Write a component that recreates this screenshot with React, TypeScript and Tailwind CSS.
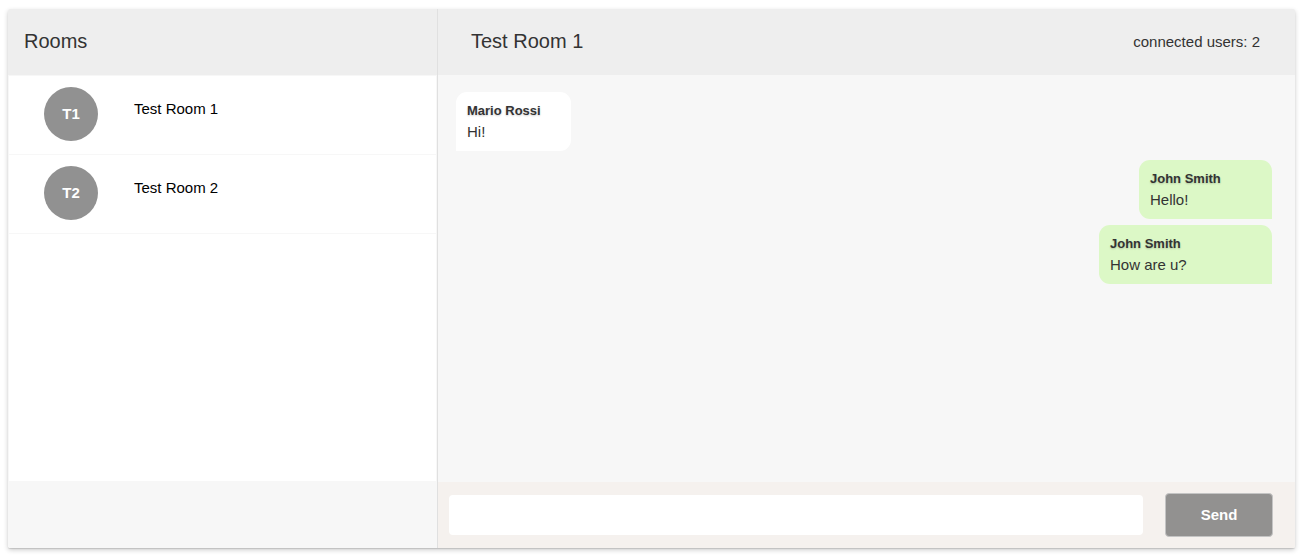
import { useState } from "react";

const rooms = [
  { id: "T1", name: "Test Room 1" },
  { id: "T2", name: "Test Room 2" },
];

const messages = [
  { author: "Mario Rossi", text: "Hi!", style: "mb-2 w-[115px] self-start rounded-bl-none bg-white" },
  { author: "John Smith", text: "Hello!", style: "mt-px w-[133px] self-end rounded-br-none bg-[#dcf8c6]" },
  { author: "John Smith", text: "How are u?", style: "mt-1.5 w-[173px] self-end rounded-br-none bg-[#dcf8c6]" },
];

export default function App() {
  const [draft, setDraft] = useState("");

  return (
    <div className="flex min-h-screen bg-white px-2 pt-[9px] pb-3 font-['Liberation_Sans',Arial,sans-serif] text-[15px] text-[#333]">
      <div className="flex flex-1 overflow-hidden rounded-xs shadow-[0_1px_1px_0_rgba(0,0,0,0.12),0_2px_5px_0_rgba(0,0,0,0.2)]">
        <aside className="flex w-1/3 flex-col">
          <header className="flex h-[66px] items-center bg-[#eee] px-4 pb-0.5">
            <h2 className="text-[20px] leading-6">Rooms</h2>
          </header>
          <ul className="flex-1 border border-b-0 border-[#f7f7f7] bg-white text-black">
            {rooms.map((room) => (
              <li key={room.id} className="border-b border-[#f7f7f7]">
                <button type="button" className="flex h-[78px] w-full items-start pt-[11px] pl-[35px] text-left">
                  <span className="flex size-[54px] items-center justify-center rounded-full bg-[#919191] font-bold text-white">
                    {room.id}
                  </span>
                  <span className="pt-3 pl-9 leading-5">{room.name}</span>
                </button>
              </li>
            ))}
          </ul>
          <div className="h-[67px] bg-[#f7f7f7]" />
        </aside>

        <main className="flex flex-1 flex-col border-l border-[#e0e0e0] bg-[#f7f7f7]">
          <header className="flex h-[66px] items-center justify-between bg-[#eee] pr-[35px] pb-0.5 pl-[33px]">
            <h1 className="text-[20px] leading-6">Test Room 1</h1>
            <span className="pt-0.5 leading-5">connected users: 2</span>
          </header>
          <section className="flex flex-1 flex-col pt-[17px] pr-[23px] pb-4 pl-[18px]">
            {messages.map((message, index) => (
              <article key={index} className={`h-[59px] rounded-[11px] px-[11px] pt-[9px] ${message.style}`}>
                <h3 className="text-[13px] leading-5 font-bold [text-shadow:0_1px_2px_rgba(0,0,0,0.2)]">
                  {message.author}
                </h3>
                <p className="leading-[22px]">{message.text}</p>
              </article>
            ))}
          </section>
          <form
            className="flex h-[66px] items-center bg-[#f5f1ee] pr-[22px] pl-[11px]"
            onSubmit={(event) => {
              event.preventDefault();
              setDraft("");
            }}
          >
            <input
              type="text"
              aria-label="Message"
              value={draft}
              onChange={(event) => setDraft(event.target.value)}
              className="h-10 min-w-0 flex-1 rounded bg-white px-3 outline-none"
            />
            <button
              type="submit"
              className="ml-[22px] h-11 w-[108px] rounded border border-[#c4c4c4] bg-[#929190] font-bold text-white"
            >
              Send
            </button>
          </form>
        </main>
      </div>
    </div>
  );
}
